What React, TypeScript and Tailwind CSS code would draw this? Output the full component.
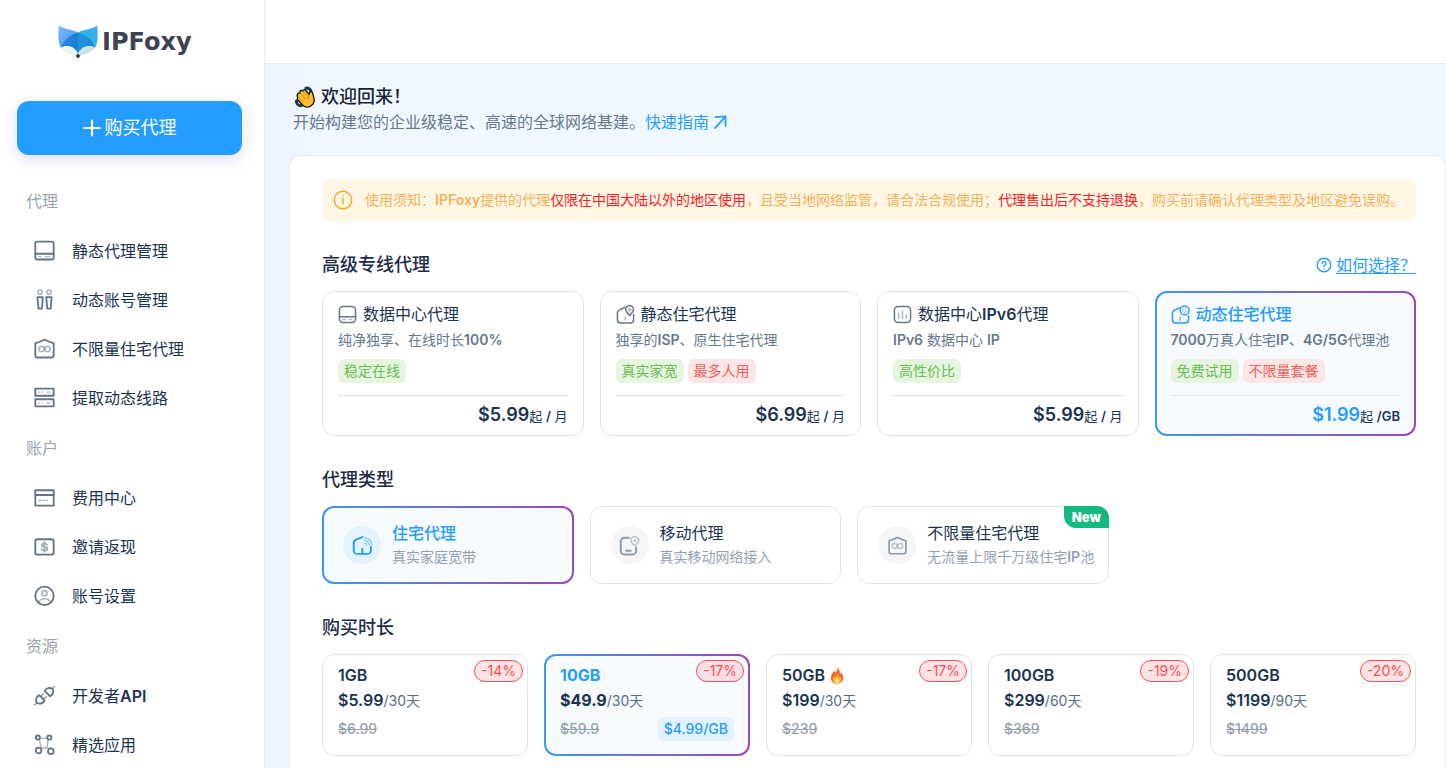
import { useState } from "react";
import type { ReactNode } from "react";
import clsx from "clsx";

/* ---------- icons ---------- */

type IconProps = { className?: string };

const Svg = ({
    className = "size-6",
    children,
}: IconProps & { children: ReactNode }) => (
    <svg
        viewBox="0 0 24 24"
        fill="none"
        stroke="currentColor"
        strokeWidth="1.9"
        strokeLinecap="round"
        strokeLinejoin="round"
        aria-hidden="true"
        className={clsx("shrink-0", className)}
    >
        {children}
    </svg>
);

const DiskIcon = (p: IconProps) => (
    <Svg {...p}>
        <rect x="2.4" y="2.8" width="19.2" height="18.6" rx="2" />
        <path d="M2.4 15.4h19.2" />
        <path d="M6 18.4h2.4M12.5 18.4H18" strokeOpacity=".5" strokeWidth="1.2" />
    </Svg>
);

const UsersIcon = (p: IconProps) => (
    <Svg {...p}>
        <g strokeOpacity=".55" strokeWidth="1.6">
            <circle cx="7.4" cy="4.4" r="2.2" />
            <circle cx="16.6" cy="4.4" r="2.2" />
        </g>
        <path d="M4.6 9.6h5.6l-.9 12H5.7zM13.8 9.6h5.6l-.9 12h-3.6z" />
    </Svg>
);

const InfinityHomeIcon = (p: IconProps) => (
    <Svg {...p}>
        <path d="M2.4 6.6c3.800-1 6.200-2 8.600-3.400a2 2 0 0 1 2 0c2.400 1.400 4.800 2.400 8.600 3.400v12.600a2.200 2.200 0 0 1-2.200 2.200H4.600a2.200 2.200 0 0 1-2.200-2.200z" />
        <g strokeOpacity=".55" strokeWidth="1.7">
            <circle cx="8.8" cy="12.6" r="2.8" />
            <circle cx="15.2" cy="12.6" r="2.8" />
        </g>
    </Svg>
);

const ServerIcon = (p: IconProps) => (
    <Svg {...p}>
        <rect x="2.4" y="2.8" width="19.2" height="7.4" />
        <rect x="2.4" y="13.8" width="19.2" height="7.4" />
        <path
            d="M6.2 6.5h.6M9.4 6.5h.6M14.5 6.5h3.3M6.2 17.5h.6M9.4 17.5h.6M14.5 17.5h3.3"
            strokeOpacity=".55"
            strokeWidth="1.3"
        />
    </Svg>
);

const BillIcon = (p: IconProps) => (
    <Svg {...p}>
        <rect x="2.4" y="4.4" width="19.2" height="16" />
        <path d="M2.4 9.4h19.2" />
        <path d="M6 15h2.2M10.6 15h1.2M14 15h1.2" strokeOpacity=".6" strokeWidth="1.4" />
    </Svg>
);

const CashIcon = (p: IconProps) => (
    <Svg {...p}>
        <rect x="2.4" y="4.4" width="19.2" height="16" rx="2" />
        <path
            d="M14.8 10.2c-.4-1-1.5-1.4-2.8-1.4-1.600 0-2.800.600-2.800 1.800 0 2.600 5.800 1.100 5.800 3.800 0 1.200-1.300 1.900-3 1.900-1.500 0-2.700-.5-3.100-1.600M12 7.600v9.800"
            strokeOpacity=".6"
        />
    </Svg>
);

const AccountIcon = (p: IconProps) => (
    <Svg {...p}>
        <circle cx="12" cy="12.400" r="9.600" />
        <g strokeOpacity=".55" strokeWidth="1.700">
            <circle cx="12" cy="9.600" r="2.700" />
            <path d="M5.600 19c1.300-2.400 3.200-3.600 6.400-3.600s5.100 1.200 6.400 3.600" />
        </g>
    </Svg>
);

const PlugIcon = (p: IconProps) => (
    <Svg {...p}>
        <path d="M12.200 7.200a6 6 0 0 1 8.200-2.200c1.300 3.400.4 6.300-2.600 7.800z" />
        <path d="M6.400 11.600a6 6 0 0 0-2.400 8.200c3.400 1.300 6.300.4 8-2.400z" />
        <path d="m20.400 5 2-2.400M4 19.800l-2.200 2M10.600 10.200 9 12.600M14 13.600l-2.600 1.600" strokeOpacity=".6" />
    </Svg>
);

const AppsIcon = (p: IconProps) => (
    <Svg {...p}>
        <path d="M7.200 5.600h7.200M6.600 6.800l2 9M15.800 7l-1.200 8.600M8.200 15.600h7.600" strokeOpacity=".5" strokeWidth="1.500" />
        <circle cx="5" cy="4.800" r="2.200" />
        <circle cx="17" cy="4.800" r="2.200" />
        <circle cx="5.800" cy="18.200" r="3" />
        <circle cx="18.600" cy="19" r="3" />
    </Svg>
);

const RoundDiskIcon = (p: IconProps) => (
    <Svg {...p}>
        <rect x="1.800" y="2" width="20.400" height="20" rx="4.600" />
        <path d="M1.800 14.800h20.400" />
        <path d="M6 18.400h3M14.500 18.400h3" strokeOpacity=".5" />
    </Svg>
);

const PinHomeIcon = (p: IconProps) => (
    <Svg {...p}>
        <path d="M11.400 2.800 4.600 6.200a4.400 4.400 0 0 0-2.800 4v8.400a4 4 0 0 0 4 4h12.400a4 4 0 0 0 4-4V12" />
        <path d="M17.200 13.200c-2.400-2.400-5-5-5-7.400a5 5 0 0 1 10 0c0 2.400-2.600 5-5 7.400z" />
        <circle cx="17.200" cy="6" r="1.500" strokeOpacity=".5" />
        <path d="M11.800 15v4" strokeOpacity=".5" />
    </Svg>
);

const ChartIcon = (p: IconProps) => (
    <Svg {...p}>
        <rect x="1.800" y="2" width="20.400" height="20" rx="4.600" />
        <path d="M7.200 10v7M12 7.200V17M16.800 12.500V17" strokeOpacity=".5" />
    </Svg>
);

const GlobeHomeIcon = (p: IconProps) => (
    <Svg {...p}>
        <path d="M11 3.400 4.400 6.600A4.400 4.400 0 0 0 1.800 10.600v8a4 4 0 0 0 4 4h12.400a4 4 0 0 0 4-4v-5" />
        <circle cx="17.200" cy="6.800" r="5.600" />
        <path d="M19.200 5.200a2.600 2.600 0 1 0 .2 3.200h-2" strokeOpacity=".55" strokeWidth="1.200" />
        <path d="M11.600 16v3.500" strokeOpacity=".7" />
    </Svg>
);

const WifiHomeIcon = (p: IconProps) => (
    <Svg {...p}>
        <path d="m12 2.400-7.400 3A4 4 0 0 0 2 9.200v8.400a4 4 0 0 0 4 4h11.600a4 4 0 0 0 4-4v-4" strokeWidth="2.200" />
        <path d="M11.800 15.600v4" strokeWidth="2.200" />
        <path d="M14.600 3.400a8 8 0 0 1 8 8M14.600 6.400a5 5 0 0 1 5 5M14.600 9.400a2 2 0 0 1 2 2" strokeOpacity=".55" strokeWidth="1.300" />
    </Svg>
);

const PhonePinIcon = (p: IconProps) => (
    <Svg {...p}>
        <path d="M11.400 3.200H6a4 4 0 0 0-4 4v11a4 4 0 0 0 4 4h9.600a4 4 0 0 0 4-4v-4" strokeWidth="2.200" />
        <path d="M8.400 18h5" strokeWidth="2.200" />
        <path d="M18 12.400c-2.400-2.200-4.600-3.800-4.600-6a4.600 4.600 0 0 1 9.200 0c0 2.200-2.200 3.800-4.600 6z" strokeOpacity=".6" strokeWidth="1.600" />
        <circle cx="18" cy="6.600" r=".8" strokeOpacity=".6" strokeWidth="1.600" />
    </Svg>
);

const FoxLogo = () => (
    <svg viewBox="0 0 40 34" className="h-[34px] w-10 shrink-0" aria-hidden="true">
        <defs>
            <linearGradient id="foxLeft" x1="0" y1="0" x2="1" y2="1">
                <stop offset="0" stopColor="#7fb6ff" />
                <stop offset="1" stopColor="#3a9bf2" />
            </linearGradient>
            <linearGradient id="foxRight" x1="1" y1="0" x2="0" y2="1">
                <stop offset="0" stopColor="#45a8f6" />
                <stop offset="1" stopColor="#14c3d8" />
            </linearGradient>
            <linearGradient id="foxFace" x1="0" y1="0" x2="1" y2="0">
                <stop offset="0" stopColor="#2486e6" />
                <stop offset=".5" stopColor="#1c7fd0" />
                <stop offset=".5" stopColor="#1f93d8" />
                <stop offset="1" stopColor="#1f87dd" />
            </linearGradient>
        </defs>
        <path d="M.8.5C6 4.500 13 4 20 7.500L3 23C-.5 17 .3 8 .8.5z" fill="url(#foxLeft)" />
        <path d="M39.200.5C34 4.500 27 4 20 7.500L37 23c3.500-6 2.700-15 2.200-22.500z" fill="url(#foxRight)" />
        <path d="M2.500 22.500c4-2.500 10-3 13 0 2.500 2 4 4 4.500 8.500C12 29.500 6 27 2.500 22.500z" fill="#eaf5f7" />
        <path d="M37.500 22.500c-4-2.500-10-3-13 0-2.500 2-4 4-4.500 8.500 8-1.500 14-4 17.500-8.500z" fill="#d3dfe0" />
        <path d="M20 7.500C11 10.500 6 14.500 2.800 22.500 7 20.500 12 20.500 15.500 23c2.300 1.800 4 3.800 4.500 6 .5-2.200 2.200-4.200 4.500-6 3.500-2.500 8.500-2.500 12.700-.5C34 14.500 29 10.500 20 7.500z" fill="url(#foxFace)" />
        <path d="m20 28.600 2.400 2.400-2.400 2.600-2.400-2.600z" fill="#343a46" />
    </svg>
);

const WaveHand = () => (
    <svg viewBox="0 0 24 24" className="mx-px size-[22px] shrink-0" aria-hidden="true">
        <path d="M13 2.400c2.600-.6 5 1 5.400 3.600M2.600 16.400c0 3 2.400 5.200 5.200 5.200" fill="none" stroke="#0f3d4a" strokeWidth="3.400" strokeLinecap="round" />
        <path
            d="M4.400 8.200c1-1 1.800-.8 2.400-.2-.8-1.400-.2-2.600.8-3 .8-.3 1.500 0 2 .5 0-1.200 1.800-2 2.900-.9l4.300 4.600c-.2-1.700.2-3 1.800-3 1.500 0 1.800 1.300 2 2.700l1.400 5.500c.5 2.700-.9 5.200-3 6.800-3.300 2.500-7.400 2.200-10-.8l-4.800-5.200c-.9-1-.7-2.100.1-2.700-.9-1.200-1.100-3 .1-4.300z"
            fill="#fdbf2d"
            stroke="#161616"
            strokeWidth="1.500"
            strokeLinejoin="round"
        />
        <path d="m7 8 5.600 6M9.800 5.800l5.200 5.600M4.800 12.200l4.800 5M16.800 9.300c-1.600 1.400-1.800 3.200-.8 5" fill="none" stroke="#c98a14" strokeWidth="1" strokeLinecap="round" />
    </svg>
);

const Fire = () => (
    <svg viewBox="0 0 16 18" className="h-[17px] w-4 shrink-0" aria-hidden="true">
        <path d="M8.400.5c.4 2.500-.6 4-2 5.700-.5-.8-.8-1.500-.8-2.400C3.500 5.800 1.500 8.600 1.500 11.600c0 3.700 2.900 6.100 6.500 6.100s6.500-2.400 6.500-6.100c0-2.400-.9-4.400-2.100-6-.1 1-.4 1.700-1 2.200C11.200 5 10.400 2 8.400.5z" fill="#f5652a" />
        <path d="M8.300 6.500c.2 2.300-1.300 3-2.300 4.300-.3-.4-.5-.8-.5-1.400-1.100 1-1.900 2.300-1.900 4 0 2.600 2 4.200 4.400 4.200s4.400-1.500 4.400-4.100c0-1.500-.6-2.700-1.300-3.500-.2.700-.5 1.100-1 1.400.1-1.900-.5-3.700-1.800-4.900z" fill="#fdb52c" />
        <path d="M8 12c-.8 1-1.900 1.700-1.900 3.200 0 1.300.9 2.200 1.900 2.200s2-.9 2-2.200c0-1.400-1.200-2.100-2-3.200z" fill="#fff3a6" />
    </svg>
);

/* latin runs are set heavier than the chinese around them */
const Mixed = ({ text }: { text: string }) => (
    <>
        {text.split(/([A-Za-z0-9%/]+)/).map((part, i) =>
            i % 2 ? (
                <span key={i} className="font-semibold">
                    {part}
                </span>
            ) : (
                part
            ),
        )}
    </>
);

/* ---------- data ---------- */

const MENU = [
    {
        title: "代理",
        items: [
            { label: "静态代理管理", icon: DiskIcon },
            { label: "动态账号管理", icon: UsersIcon },
            { label: "不限量住宅代理", icon: InfinityHomeIcon },
            { label: "提取动态线路", icon: ServerIcon },
        ],
    },
    {
        title: "账户",
        items: [
            { label: "费用中心", icon: BillIcon },
            { label: "邀请返现", icon: CashIcon },
            { label: "账号设置", icon: AccountIcon },
        ],
    },
    {
        title: "资源",
        items: [
            { label: "开发者API", icon: PlugIcon },
            { label: "精选应用", icon: AppsIcon },
        ],
    },
];

const PRODUCTS = [
    {
        name: "数据中心代理",
        icon: RoundDiskIcon,
        desc: "纯净独享、在线时长100%",
        tags: [{ text: "稳定在线" }],
        price: "$5.99",
        unit: " / 月",
    },
    {
        name: "静态住宅代理",
        icon: PinHomeIcon,
        desc: "独享的ISP、原生住宅代理",
        tags: [{ text: "真实家宽" }, { text: "最多人用", hot: true }],
        price: "$6.99",
        unit: " / 月",
    },
    {
        name: "数据中心IPv6代理",
        icon: ChartIcon,
        desc: "IPv6 数据中心 IP",
        tags: [{ text: "高性价比" }],
        price: "$5.99",
        unit: " / 月",
    },
    {
        name: "动态住宅代理",
        icon: GlobeHomeIcon,
        desc: "7000万真人住宅IP、4G/5G代理池",
        tags: [{ text: "免费试用" }, { text: "不限量套餐", hot: true }],
        price: "$1.99",
        unit: " /GB",
    },
];

const TYPES = [
    { name: "住宅代理", desc: "真实家庭宽带", icon: WifiHomeIcon },
    { name: "移动代理", desc: "真实移动网络接入", icon: PhonePinIcon },
    {
        name: "不限量住宅代理",
        desc: "无流量上限千万级住宅IP池",
        icon: InfinityHomeIcon,
        isNew: true,
    },
];

const PLANS = [
    { size: "1GB", price: "$5.99", days: "/30天", old: "$6.99", off: "-14%", avg: "$5.99/GB" },
    { size: "10GB", price: "$49.9", days: "/30天", old: "$59.9", off: "-17%", avg: "$4.99/GB" },
    { size: "50GB", price: "$199", days: "/30天", old: "$239", off: "-17%", avg: "$3.98/GB", hot: true },
    { size: "100GB", price: "$299", days: "/60天", old: "$369", off: "-19%", avg: "$2.99/GB" },
    { size: "500GB", price: "$1199", days: "/90天", old: "$1499", off: "-20%", avg: "$2.39/GB" },
];

const cardBase = "relative rounded-xl text-left";
const cardIdle = "border border-[#e0e5ec] bg-white";
const cardActive =
    "border-2 border-transparent [background:linear-gradient(#f7faff,#f7faff)_padding-box,linear-gradient(to_right,#3f98ef,#9c46b8)_border-box]";

/* ---------- sections ---------- */

const Sidebar = () => (
    <aside className="w-[265px] shrink-0 overflow-hidden border-r border-[#e9ebef] bg-white">
        <a href="#" className="mt-[25px] ml-[58px] flex h-[34px] items-center gap-1">
            <FoxLogo />
            <span className="font-['DejaVu_Sans'] text-2xl leading-8 font-bold text-[#3f4254]">
                IPFoxy
            </span>
        </a>

        <button
            type="button"
            className="mt-[42px] ml-[17px] flex h-[54px] w-[225px] items-center justify-center gap-1 rounded-xl bg-[#239dff] text-lg text-white shadow-[0_4px_14px_rgba(90,100,255,0.22)]"
        >
            <svg viewBox="0 0 18 18" className="size-[18px]" stroke="currentColor" strokeWidth="2.2" strokeLinecap="round" aria-hidden="true">
                <path d="M9 1.500v15M1.500 9h15" />
            </svg>
            购买代理
        </button>

        <nav className="mt-5">
            {MENU.map((group) => (
                <div key={group.title}>
                    <h3 className="flex h-[51px] items-center pl-[26px] text-base text-[#98a4b3]">
                        {group.title}
                    </h3>
                    {group.items.map((item) => (
                        <a
                            key={item.label}
                            href="#"
                            className="flex h-[49px] items-center gap-4 pl-[33px] text-base text-[#1b3350]"
                        >
                            <item.icon className="size-[23px] text-[#63748a]" />
                            <span>
                                <Mixed text={item.label} />
                            </span>
                        </a>
                    ))}
                </div>
            ))}
        </nav>
    </aside>
);

const Notice = () => (
    <div className="flex h-[42px] items-center gap-3 overflow-hidden rounded-lg bg-[#fff6e6] pl-[11px] text-sm whitespace-nowrap text-[#f3b256]">
        <svg viewBox="0 0 20 20" fill="none" stroke="#ffa412" strokeWidth="1.400" strokeLinecap="round" className="size-5 shrink-0" aria-hidden="true">
            <circle cx="10" cy="10" r="8.700" />
            <path d="M10 8.500v5.500M10 5.600v.3" />
        </svg>
        <p>
            使用须知：<b className="font-semibold">IPFoxy</b>提供的代理
            <span className="text-[#ff1a1f]">仅限在中国大陆以外的地区使用</span>
            ，且受当地网络监管，请合法合规使用；
            <span className="text-[#ff1a1f]">代理售出后不支持退换</span>
            ，购买前请确认代理类型及地区避免误购。
        </p>
    </div>
);

const SectionTitle = ({ children }: { children: ReactNode }) => (
    <h2 className="text-lg leading-7 font-medium text-[#1c2b48]">{children}</h2>
);

const Products = () => {
    const [active, setActive] = useState(3);

    return (
        <section className="mt-[30px]">
            <div className="flex items-center justify-between">
                <SectionTitle>高级专线代理</SectionTitle>
                <a href="#" className="flex items-center gap-1 text-base text-[#239dff]">
                    <svg viewBox="0 0 16 16" fill="none" stroke="currentColor" strokeWidth="1.400" strokeLinecap="round" className="size-4" aria-hidden="true">
                        <circle cx="8" cy="8" r="6.800" />
                        <path d="M6.100 6.400a1.900 1.900 0 1 1 2.700 1.800c-.6.3-.8.600-.8 1.200M8 11.400v.1" />
                    </svg>
                    <span className="underline underline-offset-2">如何选择？</span>
                </a>
            </div>

            <div className="mt-3 grid grid-cols-4 gap-4">
                {PRODUCTS.map((item, i) => {
                    const on = active === i;
                    return (
                        <button
                            key={item.name}
                            type="button"
                            onClick={() => setActive(i)}
                            className={clsx(
                                cardBase,
                                on ? cardActive : cardIdle,
                                on ? "px-3.5 pt-[9px] pb-[7px]" : "px-[15px] pt-2.5 pb-2",
                            )}
                        >
                            <span
                                className={clsx(
                                    "flex items-center gap-1.5 text-base leading-6",
                                    on ? "font-medium text-[#239dff]" : "text-[#1b3350]",
                                )}
                            >
                                <item.icon
                                    className={clsx("size-[19px]", !on && "text-[#66778b]")}
                                />
                                <span>
                                    <Mixed text={item.name} />
                                </span>
                            </span>
                            <span className="mt-1 block text-sm leading-5 whitespace-nowrap text-[#66788e]">
                                <Mixed text={item.desc} />
                            </span>
                            <span className="mt-[9px] flex gap-1">
                                {item.tags.map((tag) => (
                                    <span
                                        key={tag.text}
                                        className={clsx(
                                            "rounded-md px-1.5 text-sm leading-6",
                                            tag.hot
                                                ? "bg-[#fde6e6] text-[#f0605a]"
                                                : "bg-[#e5f5e0] text-[#6bbd52]",
                                        )}
                                    >
                                        {tag.text}
                                    </span>
                                ))}
                            </span>
                            <span className="mt-3 flex items-baseline justify-end border-t border-[#e0e5ec] pt-[7px] text-[13px] leading-5 whitespace-pre text-[#1b3350]">
                                <span
                                    className={clsx(
                                        "text-lg leading-6 font-semibold",
                                        on && "text-[#239dff]",
                                    )}
                                >
                                    {item.price}
                                </span>
                                <span>
                                    起<Mixed text={item.unit} />
                                </span>
                            </span>
                        </button>
                    );
                })}
            </div>
        </section>
    );
};

const ProxyTypes = () => {
    const [active, setActive] = useState(0);

    return (
        <section className="mt-[30px]">
            <SectionTitle>代理类型</SectionTitle>
            <div className="mt-3 flex gap-4">
                {TYPES.map((item, i) => {
                    const on = active === i;
                    return (
                        <button
                            key={item.name}
                            type="button"
                            onClick={() => setActive(i)}
                            className={clsx(
                                cardBase,
                                "flex w-[23%] items-center gap-[11px] whitespace-nowrap",
                                on ? cardActive : cardIdle,
                                on ? "py-[13px] pl-[19px]" : "py-3.5 pl-5",
                            )}
                        >
                            <span
                                className={clsx(
                                    "flex size-[38px] shrink-0 items-center justify-center rounded-full",
                                    on ? "bg-[#e3f2ff] text-[#239dff]" : "bg-[#f6f6f7] text-[#8b99aa]",
                                )}
                            >
                                <item.icon className="size-[21px]" />
                            </span>
                            <span>
                                <span
                                    className={clsx(
                                        "block text-base leading-6",
                                        on ? "font-medium text-[#239dff]" : "text-[#1b3350]",
                                    )}
                                >
                                    {item.name}
                                </span>
                                <span className="block text-sm leading-6 text-[#94a1b0]">
                                    <Mixed text={item.desc} />
                                </span>
                            </span>
                            {item.isNew && (
                                <span className="absolute -top-px -right-px rounded-tr-xl rounded-bl-xl bg-[#12b981] px-2 text-[13px] leading-[22px] font-black text-white">
                                    New
                                </span>
                            )}
                        </button>
                    );
                })}
            </div>
        </section>
    );
};

const Plans = () => {
    const [active, setActive] = useState(1);

    return (
        <section className="mt-[30px]">
            <SectionTitle>购买时长</SectionTitle>
            <div className="mt-3 grid grid-cols-5 gap-4">
                {PLANS.map((plan, i) => {
                    const on = active === i;
                    return (
                        <button
                            key={plan.size}
                            type="button"
                            onClick={() => setActive(i)}
                            className={clsx(
                                cardBase,
                                "flex flex-col",
                                on ? cardActive : cardIdle,
                                on ? "px-3.5 pt-[7px] pb-[13px]" : "px-[15px] pt-2 pb-3.5",
                            )}
                        >
                            <span
                                className={clsx(
                                    "flex items-center gap-1 text-base leading-6",
                                    on ? "font-bold text-[#239dff]" : "font-semibold text-[#1b3350]",
                                )}
                            >
                                {plan.size}
                                {plan.hot && <Fire />}
                            </span>
                            <span className="mt-px flex items-baseline text-sm leading-5 text-[#5b6c82]">
                                <span
                                    className={clsx(
                                        "text-base leading-6 text-[#1b3350]",
                                        on ? "font-bold" : "font-semibold",
                                    )}
                                >
                                    {plan.price}
                                </span>
                                {plan.days}
                            </span>
                            <span className="mt-[5px] flex w-full items-center justify-between text-sm leading-6 font-medium">
                                <s className="text-[#94a1b0]">{plan.old}</s>
                                {on && (
                                    <span className="rounded-md bg-[#e3f2ff] px-1.5 text-[#239dff]">
                                        {plan.avg}
                                    </span>
                                )}
                            </span>
                            <span
                                className={clsx(
                                    "absolute rounded-full border border-[#ff4d4f] bg-[#ff4d4f]/15 px-1.5 text-sm leading-5 text-[#ff4d4f]",
                                    on ? "top-1 right-1" : "top-[5px] right-1",
                                )}
                            >
                                {plan.off}
                            </span>
                        </button>
                    );
                })}
            </div>
        </section>
    );
};

export default function App() {
    return (
        <div className="flex h-screen overflow-hidden bg-white font-['Inter','Noto_Sans_CJK_SC',sans-serif]">
            <Sidebar />

            <div className="flex min-w-0 flex-1 flex-col">
                <header className="h-16 shrink-0 border-b border-[#e9ebef] bg-white" />

                <main className="flex min-h-0 flex-1 flex-col bg-linear-to-r from-[#edf3ff] to-[#f0f8ff] to-5% pl-6">
                    <div className="pt-[19px] pl-1">
                        <h1 className="flex items-center gap-1 text-lg leading-7 font-medium text-[#1c1f3b]">
                            <WaveHand />
                            欢迎回来！
                        </h1>
                        <p className="-mt-px flex items-center text-base leading-6 text-[#66788e]">
                            开始构建您的企业级稳定、高速的全球网络基建。
                            <a href="#" className="flex items-center gap-1 text-[#239dff]">
                                快速指南
                                <svg viewBox="0 0 14 14" fill="none" stroke="currentColor" strokeWidth="1.800" strokeLinecap="round" strokeLinejoin="round" className="size-3.5" aria-hidden="true">
                                    <path d="M2 13.200 12.200 1.800M2.600 2.200l9.800-.8.200 9.400" />
                                </svg>
                            </a>
                        </p>
                    </div>

                    <div className="mt-[21px] flex-1 overflow-hidden rounded-t-xl border border-b-0 border-[#e9ebef] bg-white pt-[23px] pr-[29px] pl-8">
                        <Notice />
                        <Products />
                        <ProxyTypes />
                        <Plans />
                    </div>
                </main>
            </div>
        </div>
    );
}
